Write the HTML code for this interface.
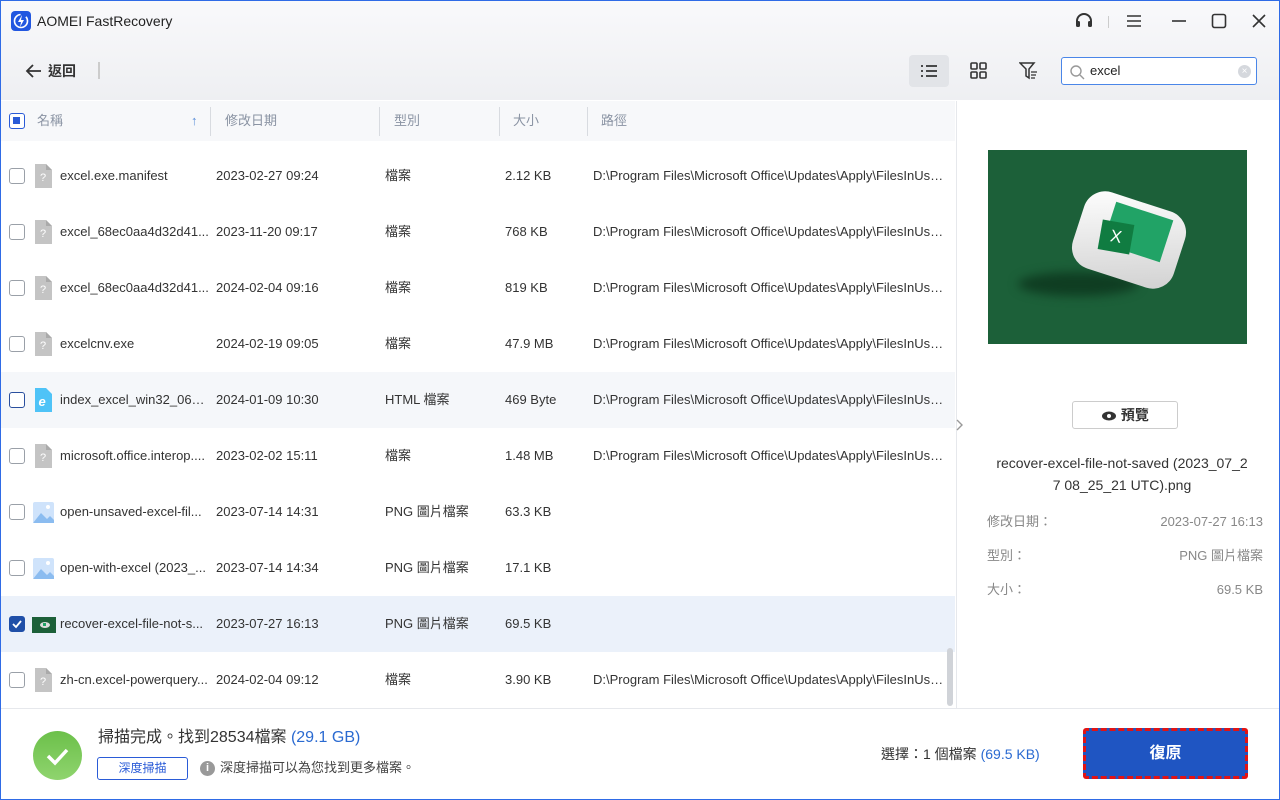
<!DOCTYPE html>
<html><head><meta charset="utf-8"><style>
*{box-sizing:border-box;margin:0;padding:0}
body{width:1280px;height:800px;overflow:hidden;font-family:"Liberation Sans","Noto Sans CJK TC",sans-serif;background:#fff;position:relative;color:#333}
.win{position:absolute;left:0;top:0;width:1280px;height:800px;border:1px solid #2f6be6}
.top{position:absolute;left:1px;top:1px;width:1278px;height:99px;background:linear-gradient(#f9f9fb,#eeeff2)}
.abs{position:absolute}
.hdr{position:absolute;left:1px;top:101px;width:954px;height:40px;background:#f7f8fa;font-size:13px;color:#8a93a3}
.hdr span{position:absolute;top:0;line-height:40px;height:40px}
.sep{position:absolute;top:6px;width:1px;height:29px;background:#d8dbe0}
.row{position:absolute;left:1px;width:954px;height:56px;font-size:13px;color:#333}
.row span{position:absolute;top:0;height:56px;line-height:56px;white-space:nowrap;overflow:hidden;text-overflow:ellipsis}
.row span.p{width:355px}
.cb{position:absolute;left:8px;top:20px;width:16px;height:16px;border:1.5px solid #9aa0a8;border-radius:3px;background:#fff}
.fi{position:absolute;left:33px;top:16px;width:18px;height:24px}
.right{position:absolute;left:956px;top:101px;width:323px;height:607px;border-left:1px solid #e6e8ec;background:#fff}
.bottom{position:absolute;left:1px;top:708px;width:1278px;height:91px;border-top:1px solid #e6e8ec;background:#fff}
.lh{line-height:20px;height:20px}
</style></head><body>
<div class="top"></div>
<div class="win"></div>
<div class="abs" style="left:11px;top:11px;width:20px;height:20px;border-radius:4px;background:#2257e0"><svg width="20" height="20" viewBox="0 0 20 20"><circle cx="10" cy="10" r="6.5" fill="none" stroke="#fff" stroke-width="1.6" stroke-dasharray="30 6"/><path d="M11 4L7 11h3l-1 5 4-7h-3z" fill="#fff"/></svg></div>
<div class="abs lh" style="left:37px;top:11px;font-size:14px;color:#222">AOMEI FastRecovery</div>
<svg class="abs" style="left:1074px;top:12px" width="20" height="18" viewBox="0 0 20 18"><path d="M3 12V9a7 7 0 0114 0v3" fill="none" stroke="#333" stroke-width="2"/><rect x="2" y="9" width="4" height="6" rx="1.5" fill="#333"/><rect x="14" y="9" width="4" height="6" rx="1.5" fill="#333"/></svg>
<div class="abs" style="left:1108px;top:16px;width:1px;height:12px;background:#ccc"></div>
<svg class="abs" style="left:1126px;top:14px" width="16" height="14"><path d="M1 2h14M1 7h14M1 12h14" stroke="#333" stroke-width="1.6"/></svg>
<svg class="abs" style="left:1171px;top:14px" width="16" height="14"><path d="M1 7h14" stroke="#333" stroke-width="1.6"/></svg>
<svg class="abs" style="left:1211px;top:13px" width="16" height="16"><rect x="1.5" y="1.5" width="13" height="13" rx="2" fill="none" stroke="#333" stroke-width="1.6"/></svg>
<svg class="abs" style="left:1251px;top:13px" width="16" height="16"><path d="M2 2l12 12M14 2L2 14" stroke="#333" stroke-width="1.6"/></svg>
<svg class="abs" style="left:24px;top:63px" width="18" height="16"><path d="M17 8H3M9 2L3 8l6 6" fill="none" stroke="#333" stroke-width="1.8"/></svg>
<div class="abs lh" style="left:48px;top:61px;font-size:14px;font-weight:bold;color:#333">返回</div>
<div class="abs" style="left:98px;top:62px;width:2px;height:17px;background:#ccc"></div>
<div class="abs" style="left:909px;top:55px;width:40px;height:32px;border-radius:4px;background:#e2e4e8"></div>
<svg class="abs" style="left:920px;top:63px" width="18" height="16"><path d="M1 3h2M6 3h11M1 8h2M6 8h11M1 13h2M6 13h11" stroke="#333" stroke-width="1.8"/></svg>
<svg class="abs" style="left:970px;top:62px" width="18" height="18"><rect x="1" y="1" width="6" height="6" rx="1" fill="none" stroke="#333" stroke-width="1.6"/><rect x="10" y="1" width="6" height="6" rx="1" fill="none" stroke="#333" stroke-width="1.6"/><rect x="1" y="10" width="6" height="6" rx="1" fill="none" stroke="#333" stroke-width="1.6"/><rect x="10" y="10" width="6" height="6" rx="1" fill="none" stroke="#333" stroke-width="1.6"/></svg>
<svg class="abs" style="left:1019px;top:62px" width="20" height="18"><path d="M1 1h14l-5 6v9l-3-2V7z" fill="none" stroke="#333" stroke-width="1.5"/><path d="M12 10h6M12 13h5M12 16h4" stroke="#333" stroke-width="1.3"/></svg>
<div class="abs" style="left:1061px;top:57px;width:196px;height:28px;border:1.5px solid #4a86e8;border-radius:3px;background:#fff"></div>
<svg class="abs" style="left:1069px;top:64px" width="16" height="16"><circle cx="7" cy="7" r="5" fill="none" stroke="#999" stroke-width="1.4"/><path d="M11 11l4 4" stroke="#999" stroke-width="1.4"/></svg>
<div class="abs lh" style="left:1090px;top:61px;font-size:13px;color:#222">excel</div>
<div class="abs" style="left:1238px;top:65px;width:13px;height:13px;border-radius:50%;background:#d5d8dd;color:#fff;font-size:10px;line-height:13px;text-align:center">×</div>
<div class="hdr">
<div class="abs" style="left:8px;top:12px;width:16px;height:16px;border:1.5px solid #2a5bd7;border-radius:3px;background:#fff"><div style="margin:3px;width:7px;height:7px;background:#2a5bd7"></div></div>
<span style="left:36px">名稱</span><span style="left:190px;color:#5b8fd9">↑</span>
<div class="sep" style="left:209px"></div><span style="left:224px">修改日期</span>
<div class="sep" style="left:378px"></div><span style="left:393px">型別</span>
<div class="sep" style="left:498px"></div><span style="left:512px">大小</span>
<div class="sep" style="left:586px"></div><span style="left:600px">路徑</span>
</div>
<div class="row" style="top:148px"><div class="cb"></div><svg class="fi" viewBox="0 0 18 24"><path d="M1 0h11l6 6v18H1z" fill="#c4c4c4"/><path d="M12 0v6h6" fill="#aaa"/><text x="6" y="17" font-size="11" fill="#fff" font-family="Liberation Sans">?</text></svg><span style="left:59px">excel.exe.manifest</span><span style="left:215px">2023-02-27 09:24</span><span style="left:384px">檔案</span><span style="left:504px">2.12 KB</span><span class="p" style="left:592px">D:\Program Files\Microsoft Office\Updates\Apply\FilesInUse\...</span></div>
<div class="row" style="top:204px"><div class="cb"></div><svg class="fi" viewBox="0 0 18 24"><path d="M1 0h11l6 6v18H1z" fill="#c4c4c4"/><path d="M12 0v6h6" fill="#aaa"/><text x="6" y="17" font-size="11" fill="#fff" font-family="Liberation Sans">?</text></svg><span style="left:59px">excel_68ec0aa4d32d41...</span><span style="left:215px">2023-11-20 09:17</span><span style="left:384px">檔案</span><span style="left:504px">768 KB</span><span class="p" style="left:592px">D:\Program Files\Microsoft Office\Updates\Apply\FilesInUse\...</span></div>
<div class="row" style="top:260px"><div class="cb"></div><svg class="fi" viewBox="0 0 18 24"><path d="M1 0h11l6 6v18H1z" fill="#c4c4c4"/><path d="M12 0v6h6" fill="#aaa"/><text x="6" y="17" font-size="11" fill="#fff" font-family="Liberation Sans">?</text></svg><span style="left:59px">excel_68ec0aa4d32d41...</span><span style="left:215px">2024-02-04 09:16</span><span style="left:384px">檔案</span><span style="left:504px">819 KB</span><span class="p" style="left:592px">D:\Program Files\Microsoft Office\Updates\Apply\FilesInUse\...</span></div>
<div class="row" style="top:316px"><div class="cb"></div><svg class="fi" viewBox="0 0 18 24"><path d="M1 0h11l6 6v18H1z" fill="#c4c4c4"/><path d="M12 0v6h6" fill="#aaa"/><text x="6" y="17" font-size="11" fill="#fff" font-family="Liberation Sans">?</text></svg><span style="left:59px">excelcnv.exe</span><span style="left:215px">2024-02-19 09:05</span><span style="left:384px">檔案</span><span style="left:504px">47.9 MB</span><span class="p" style="left:592px">D:\Program Files\Microsoft Office\Updates\Apply\FilesInUse\...</span></div>
<div class="row" style="top:372px;background:#f5f7fa"><div class="cb" style="border-color:#2a4f9e"></div><svg class="fi" viewBox="0 0 18 24"><path d="M1 0h11l6 6v18H1z" fill="#4fc3f7"/><text x="4.5" y="18" font-size="13" font-style="italic" font-weight="bold" fill="#fff" font-family="Liberation Sans">e</text></svg><span style="left:59px;width:148px">index_excel_win32_06c2...</span><span style="left:215px">2024-01-09 10:30</span><span style="left:384px">HTML 檔案</span><span style="left:504px">469 Byte</span><span class="p" style="left:592px">D:\Program Files\Microsoft Office\Updates\Apply\FilesInUse\...</span></div>
<div class="row" style="top:428px"><div class="cb"></div><svg class="fi" viewBox="0 0 18 24"><path d="M1 0h11l6 6v18H1z" fill="#c4c4c4"/><path d="M12 0v6h6" fill="#aaa"/><text x="6" y="17" font-size="11" fill="#fff" font-family="Liberation Sans">?</text></svg><span style="left:59px">microsoft.office.interop....</span><span style="left:215px">2023-02-02 15:11</span><span style="left:384px">檔案</span><span style="left:504px">1.48 MB</span><span class="p" style="left:592px">D:\Program Files\Microsoft Office\Updates\Apply\FilesInUse\...</span></div>
<div class="row" style="top:484px"><div class="cb"></div><svg class="abs" style="left:32px;top:18px" width="21" height="21" viewBox="0 0 21 21"><rect width="21" height="21" rx="2" fill="#cfe3fb"/><path d="M0 21l8-10 6 6 3-3 4 4v3z" fill="#8bbcf0"/><circle cx="15" cy="5" r="2" fill="#fff"/></svg><span style="left:59px">open-unsaved-excel-fil...</span><span style="left:215px">2023-07-14 14:31</span><span style="left:384px">PNG 圖片檔案</span><span style="left:504px">63.3 KB</span></div>
<div class="row" style="top:540px"><div class="cb"></div><svg class="abs" style="left:32px;top:18px" width="21" height="21" viewBox="0 0 21 21"><rect width="21" height="21" rx="2" fill="#cfe3fb"/><path d="M0 21l8-10 6 6 3-3 4 4v3z" fill="#8bbcf0"/><circle cx="15" cy="5" r="2" fill="#fff"/></svg><span style="left:59px">open-with-excel (2023_...</span><span style="left:215px">2023-07-14 14:34</span><span style="left:384px">PNG 圖片檔案</span><span style="left:504px">17.1 KB</span></div>
<div class="row" style="top:596px;background:#ebf1fa"><div class="cb" style="background:#1f4fa8;border-color:#1f4fa8"><svg width="13" height="13" style="position:absolute;left:0;top:0"><path d="M3 7l3 3 5-6" fill="none" stroke="#fff" stroke-width="1.8"/></svg></div><svg class="abs" style="left:31px;top:21px" width="24" height="16"><rect width="24" height="16" fill="#1c6039"/><ellipse cx="13" cy="8" rx="5" ry="3" fill="#ddd"/><rect x="11" y="6" width="3" height="3" fill="#21a366"/></svg><span style="left:59px">recover-excel-file-not-s...</span><span style="left:215px">2023-07-27 16:13</span><span style="left:384px">PNG 圖片檔案</span><span style="left:504px">69.5 KB</span></div>
<div class="row" style="top:652px"><div class="cb"></div><svg class="fi" viewBox="0 0 18 24"><path d="M1 0h11l6 6v18H1z" fill="#c4c4c4"/><path d="M12 0v6h6" fill="#aaa"/><text x="6" y="17" font-size="11" fill="#fff" font-family="Liberation Sans">?</text></svg><span style="left:59px">zh-cn.excel-powerquery...</span><span style="left:215px">2024-02-04 09:12</span><span style="left:384px">檔案</span><span style="left:504px">3.90 KB</span><span class="p" style="left:592px">D:\Program Files\Microsoft Office\Updates\Apply\FilesInUse\...</span></div>
<div class="abs" style="left:947px;top:648px;width:6px;height:58px;border-radius:3px;background:#d0d3d8"></div>
<div class="right">
<svg class="abs" style="left:-1px;top:318px" width="8" height="12"><path d="M1 1l5 5-5 5" fill="none" stroke="#999" stroke-width="1.4"/></svg>
<div class="abs" style="left:31px;top:49px;width:259px;height:194px;background:#1c6039;overflow:hidden">
<div class="abs" style="left:30px;top:122px;width:120px;height:24px;border-radius:50%;background:#0f3d22;filter:blur(5px)"></div>
<div class="abs" style="left:88px;top:50px;width:106px;height:80px;border-radius:22px;background:linear-gradient(160deg,#fff,#d0d0d0);transform:rotate(18deg)"></div>
<div class="abs" style="left:120px;top:60px;width:60px;height:44px;background:#21a366;transform:rotate(18deg)"></div>
<div class="abs" style="left:112px;top:72px;width:32px;height:30px;background:#107c41;color:#fff;font-size:17px;text-align:center;line-height:30px;transform:rotate(10deg)">X</div>
</div>
<div class="abs" style="left:115px;top:300px;width:106px;height:28px;border:1px solid #ccc;border-radius:3px;font-size:14px;font-weight:bold;color:#333;text-align:center;line-height:26px"><svg width="16" height="10" style="vertical-align:-1px"><ellipse cx="8" cy="5" rx="7" ry="4.5" fill="#333"/><circle cx="8" cy="5" r="2" fill="#fff"/></svg> 預覽</div>
<div class="abs" style="left:20px;top:351px;width:290px;text-align:center;font-size:14px;line-height:22px;color:#333">recover-excel-file-not-saved (2023_07_2<br>7 08_25_21 UTC).png</div>
<div class="abs lh" style="left:30px;top:411px;font-size:13px;color:#888">修改日期：</div><div class="abs lh" style="right:16px;top:411px;font-size:13px;color:#888">2023-07-27 16:13</div>
<div class="abs lh" style="left:30px;top:445px;font-size:13px;color:#888">型別：</div><div class="abs lh" style="right:16px;top:445px;font-size:13px;color:#888">PNG 圖片檔案</div>
<div class="abs lh" style="left:30px;top:479px;font-size:13px;color:#888">大小：</div><div class="abs lh" style="right:16px;top:479px;font-size:13px;color:#888">69.5 KB</div>
</div>
<div class="bottom">
<div class="abs" style="left:32px;top:22px;width:49px;height:49px;border-radius:50%;background:linear-gradient(#6cc04a,#8fd46e)"><svg width="49" height="49"><path d="M15 25l7 7 12-13" fill="none" stroke="#fff" stroke-width="3.5"/></svg></div>
<div class="abs" style="left:97px;top:18px;font-size:16px;line-height:22px;color:#333">掃描完成。找到28534檔案 <span style="color:#2a6ad1">(29.1 GB)</span></div>
<div class="abs" style="left:96px;top:48px;width:91px;height:23px;border:1px solid #2a5bd7;border-radius:3px;font-size:12px;color:#2a5bd7;text-align:center;line-height:21px">深度掃描</div>
<div class="abs" style="left:199px;top:52px;width:15px;height:15px;border-radius:50%;background:#999;color:#fff;font-size:11px;font-weight:bold;text-align:center;line-height:15px">i</div>
<div class="abs lh" style="left:219px;top:49px;font-size:13px;color:#444">深度掃描可以為您找到更多檔案。</div>
<div class="abs lh" style="left:880px;top:35px;font-size:14px;color:#333">選擇：1 個檔案 <span style="color:#2a6ad1">(69.5 KB)</span></div>
<div class="abs" style="left:1082px;top:19px;width:165px;height:51px;background:#1f55c2;border:3px dashed #e21313;border-radius:3px;color:#fff;font-size:16px;font-weight:bold;text-align:center;line-height:45px">復原</div>
</div>
</body></html>
